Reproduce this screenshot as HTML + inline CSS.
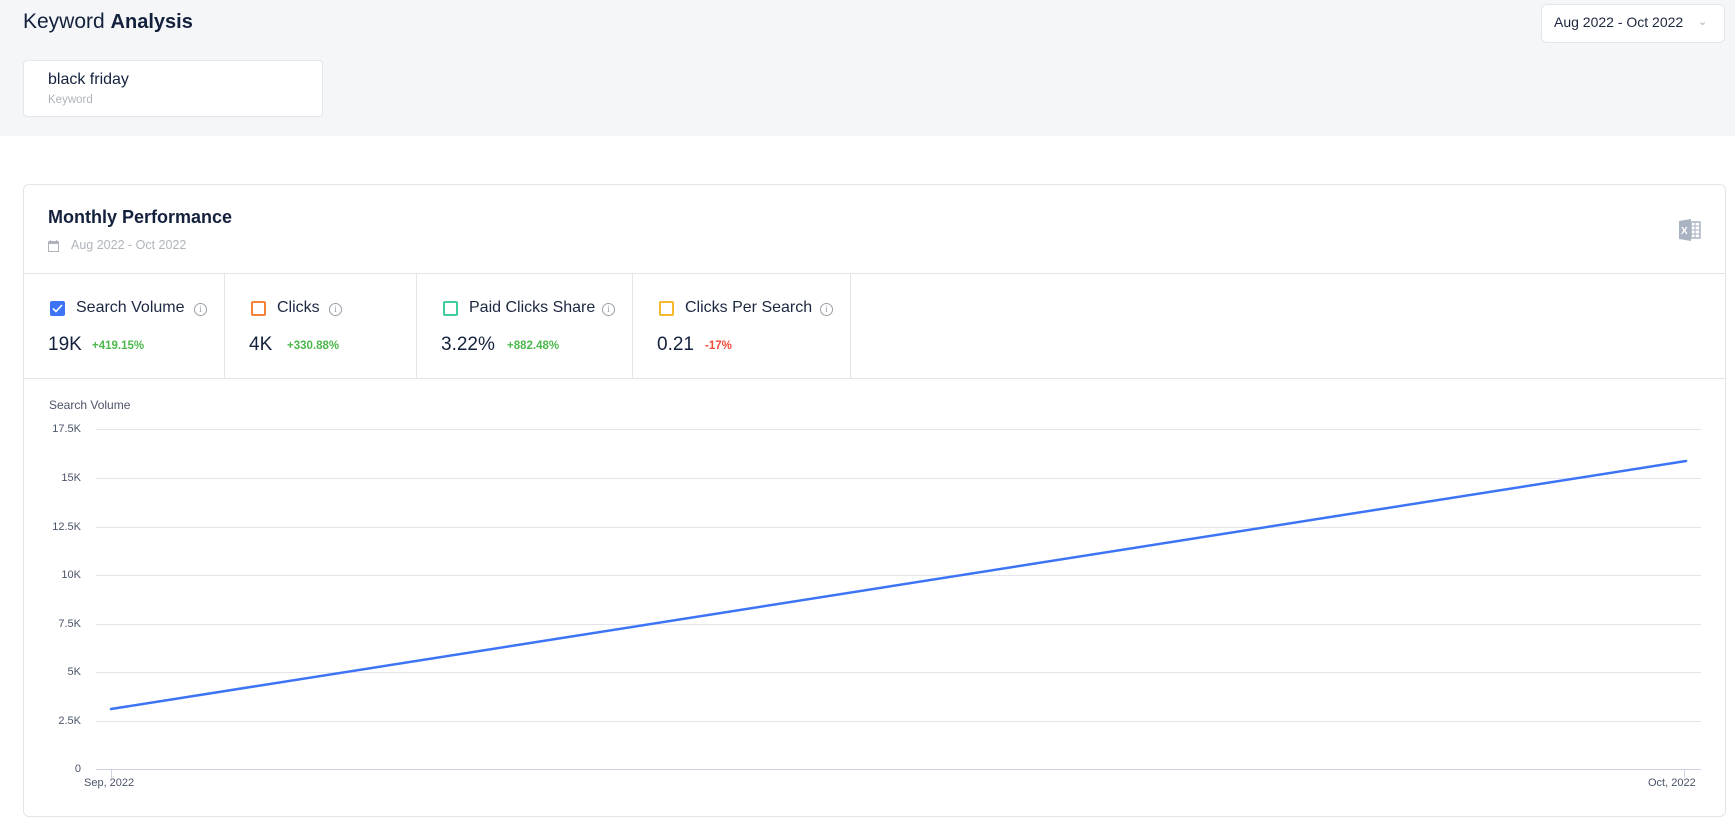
<!DOCTYPE html>
<html><head><meta charset="utf-8"><style>
*{margin:0;padding:0;box-sizing:border-box}
body{width:1735px;height:818px;overflow:hidden;background:#fff;font-family:"Liberation Sans",sans-serif;color:#14213d;position:relative}
.a{position:absolute;white-space:nowrap}
.hdr{position:absolute;left:0;top:0;width:1735px;height:136px;background:#f5f6f8}
.card{position:absolute;left:23px;top:184px;width:1703px;height:633px;border:1px solid #e2e5ea;border-radius:6px;background:#fff}
.cb{position:absolute;width:15px;height:15px;border-radius:2px;border:2px solid}
.info{position:absolute;width:13px;height:13px;border:1px solid #9aa0a8;border-radius:50%;font-size:9px;color:#9aa0a8;text-align:center;line-height:11px;font-family:"Liberation Serif",serif}
.lbl{font-size:16px;color:#1c2740}
.val{font-size:19px;color:#14213d}
.pct{font-size:11.5px;font-weight:bold;color:#4cb84c}
.yl{position:absolute;right:1654px;font-size:11px;color:#4a5468;text-align:right}
.sep{position:absolute;top:274px;width:1px;height:104px;background:#e2e5ea}
</style></head><body>
<div class="hdr"></div>
<div class="a" style="left:23px;top:10px;font-size:21px;color:#14213d">Keyword <span style="font-weight:bold;font-size:20px">Analysis</span></div>
<div class="a" style="left:1541px;top:4px;width:184px;height:39px;background:#fff;border:1px solid #e3e6ea;border-radius:6px"></div>
<div class="a" style="left:1554px;top:14px;font-size:14px;color:#1c2740">Aug 2022 - Oct 2022</div>
<div class="a" style="left:1698px;top:15px;font-size:11px;color:#aab">&#8964;</div>
<div class="a" style="left:23px;top:60px;width:300px;height:57px;background:#fff;border:1px solid #e3e6ea;border-radius:4px"></div>
<div class="a" style="left:48px;top:71px;font-size:16px;color:#14213d">black friday</div>
<div class="a" style="left:48px;top:94px;font-size:11.5px;color:#b0b5bd">Keyword</div>

<div class="card"></div>
<div class="a" style="left:48px;top:207px;font-size:18px;font-weight:bold;color:#14213d">Monthly Performance</div>
<svg class="a" style="left:48px;top:240px" width="11" height="12" viewBox="0 0 11 12"><rect x="0.5" y="1.5" width="10" height="10" fill="none" stroke="#b0b5bd"/><rect x="0.5" y="1.5" width="10" height="2.5" fill="#b0b5bd"/><rect x="2" y="0" width="1" height="2" fill="#b0b5bd"/><rect x="8" y="0" width="1" height="2" fill="#b0b5bd"/></svg>
<div class="a" style="left:71px;top:238px;font-size:12.5px;color:#b0b5bd">Aug 2022 - Oct 2022</div>
<svg class="a" style="left:1679px;top:218px" width="22" height="24" viewBox="0 0 22 24"><path d="M0 3L12 1V23L0 21Z" fill="#aab3c2"/><text x="2" y="16" font-size="10" font-family="Liberation Sans" font-weight="bold" fill="#fff">X</text><rect x="12" y="4" width="9" height="16" fill="none" stroke="#aab3c2" stroke-width="1.5"/><path d="M12 8H21M12 12H21M12 16H21M16 4V20" stroke="#aab3c2" stroke-width="1"/></svg>
<div class="a" style="left:24px;top:273px;width:1701px;height:1px;background:#e2e5ea"></div>
<div class="a" style="left:24px;top:378px;width:1701px;height:1px;background:#e2e5ea"></div>
<div class="sep" style="left:224px"></div><div class="sep" style="left:416px"></div><div class="sep" style="left:632px"></div><div class="sep" style="left:850px"></div>

<div class="cb" style="left:50px;top:301px;background:#3d74f5;border-color:#3d74f5"></div>
<svg class="a" style="left:52px;top:304px" width="11" height="9"><path d="M1 4.5L4 7.5L10 1" stroke="#fff" stroke-width="1.6" fill="none"/></svg>
<div class="a lbl" style="left:76px;top:299px">Search Volume</div><div class="info" style="left:194px;top:303px">i</div>
<div class="a val" style="left:48px;top:334px">19K</div><div class="a pct" style="left:92px;top:340px">+419.15%</div>

<div class="cb" style="left:251px;top:301px;border-color:#f5823a"></div>
<div class="a lbl" style="left:277px;top:299px">Clicks</div><div class="info" style="left:329px;top:303px">i</div>
<div class="a val" style="left:249px;top:334px">4K</div><div class="a pct" style="left:287px;top:340px">+330.88%</div>

<div class="cb" style="left:443px;top:301px;border-color:#3fcca0"></div>
<div class="a lbl" style="left:469px;top:299px">Paid Clicks Share</div><div class="info" style="left:602px;top:303px">i</div>
<div class="a val" style="left:441px;top:334px">3.22%</div><div class="a pct" style="left:507px;top:340px">+882.48%</div>

<div class="cb" style="left:659px;top:301px;border-color:#f5b82e"></div>
<div class="a lbl" style="left:685px;top:299px">Clicks Per Search</div><div class="info" style="left:820px;top:303px">i</div>
<div class="a val" style="left:657px;top:334px">0.21</div><div class="a pct" style="left:705px;top:340px;color:#f04a3a">-17%</div>

<div class="a" style="left:49px;top:398px;font-size:12px;color:#4a5468">Search Volume</div>
<svg class="a" style="left:0;top:0" width="1735" height="818">
<g stroke="#e3e5ea" stroke-width="1">
<path d="M96 429.5H1701M96 478.5H1701M96 527.5H1701M96 575.5H1701M96 624.5H1701M96 672.5H1701M96 721.5H1701"/>
</g>
<path d="M96 769.5H1701M111.5 769V778M1684.5 769V778" stroke="#ccd4e4"/>
<path d="M111 709L1686 461" stroke="#3d74f5" stroke-width="2.5" stroke-linecap="round"/>
</svg>
<div class="yl" style="top:423px">17.5K</div><div class="yl" style="top:472px">15K</div><div class="yl" style="top:521px">12.5K</div><div class="yl" style="top:569px">10K</div><div class="yl" style="top:618px">7.5K</div><div class="yl" style="top:666px">5K</div><div class="yl" style="top:715px">2.5K</div><div class="yl" style="top:763px">0</div>
<div class="a" style="left:84px;top:777px;font-size:11px;color:#4a5468">Sep, 2022</div>
<div class="a" style="left:1648px;top:777px;font-size:11px;color:#4a5468">Oct, 2022</div>
</body></html>
